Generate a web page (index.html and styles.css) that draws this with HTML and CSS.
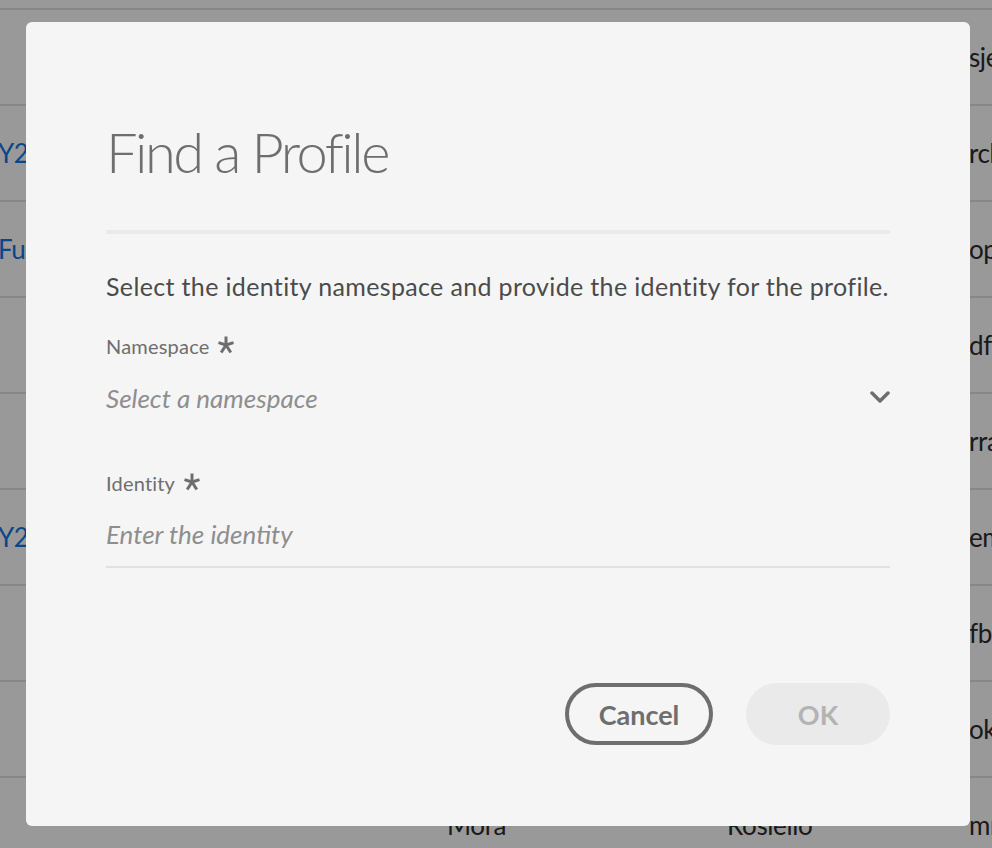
FILE: index.html
```html
<!DOCTYPE html>
<html lang="en">
<head>
<meta charset="utf-8">
<title>Find a Profile</title>
<link rel="stylesheet" href="styles.css">
</head>
<body>
<main class="page">
  <div class="table">
    <div class="row"><span class="cell c1 link"></span><span class="cell c2">Jensen</span><span class="cell c3">Sara</span><span class="cell c4">sjensen</span></div>
    <div class="row"><span class="cell c1 link">Y29sZWN0aW9u</span><span class="cell c2">Chang</span><span class="cell c3">Richard</span><span class="cell c4">rchang</span></div>
    <div class="row"><span class="cell c1 link">FuZW50aXR5</span><span class="cell c2">Patel</span><span class="cell c3">Omar</span><span class="cell c4">opatel</span></div>
    <div class="row"><span class="cell c1 link"></span><span class="cell c2">Farley</span><span class="cell c3">Dana</span><span class="cell c4">dfarley</span></div>
    <div class="row"><span class="cell c1 link"></span><span class="cell c2">Ramos</span><span class="cell c3">Rita</span><span class="cell c4">rramos</span></div>
    <div class="row"><span class="cell c1 link">Y2FsbGVk</span><span class="cell c2">Miller</span><span class="cell c3">Emma</span><span class="cell c4">emiller</span></div>
    <div class="row"><span class="cell c1 link"></span><span class="cell c2">Benson</span><span class="cell c3">Frank</span><span class="cell c4">fbenson</span></div>
    <div class="row"><span class="cell c1 link"></span><span class="cell c2">Kim</span><span class="cell c3">Olivia</span><span class="cell c4">okim</span></div>
    <div class="row"><span class="cell c1 link"></span><span class="cell c2">Mora</span><span class="cell c3">Rosiello</span><span class="cell c4">mross</span></div>
  </div>
</main>

<div class="underlay"></div>

<div class="modal-wrap">
  <section class="dialog" role="dialog" aria-labelledby="dlg-title">
    <h1 class="dialog-title" id="dlg-title">Find a Profile</h1>
    <hr class="divider">
    <p class="dialog-desc">Select the identity namespace and provide the identity for the profile.</p>

    <div class="field">
      <label class="field-label">Namespace
        <svg class="asterisk" width="16" height="18" viewBox="0 0 16 18" aria-hidden="true">
          <g stroke="#6e6e6e" stroke-width="3" stroke-linecap="butt" fill="none">
            <line x1="8" y1="9" x2="8" y2="0.5"/>
            <line x1="8" y1="9" x2="0.5" y2="6.6"/>
            <line x1="8" y1="9" x2="15.5" y2="6.6"/>
            <line x1="8" y1="9" x2="3.2" y2="16.5"/>
            <line x1="8" y1="9" x2="12.8" y2="16.5"/>
          </g>
        </svg>
      </label>
      <div class="picker">
        <span class="placeholder">Select a namespace</span>
        <svg class="chevron" width="20" height="12" viewBox="0 0 20 12" aria-hidden="true">
          <polyline points="2,2 10,10 18,2" fill="none" stroke="#6e6e6e" stroke-width="3.5" stroke-linecap="round" stroke-linejoin="round"/>
        </svg>
      </div>
    </div>

    <div class="field field-identity">
      <label class="field-label">Identity
        <svg class="asterisk" width="16" height="18" viewBox="0 0 16 18" aria-hidden="true">
          <g stroke="#6e6e6e" stroke-width="3" stroke-linecap="butt" fill="none">
            <line x1="8" y1="9" x2="8" y2="0.5"/>
            <line x1="8" y1="9" x2="0.5" y2="6.6"/>
            <line x1="8" y1="9" x2="15.5" y2="6.6"/>
            <line x1="8" y1="9" x2="3.2" y2="16.5"/>
            <line x1="8" y1="9" x2="12.8" y2="16.5"/>
          </g>
        </svg>
      </label>
      <div class="textfield">
        <span class="placeholder">Enter the identity</span>
      </div>
    </div>

    <footer class="dialog-footer">
      <button class="btn btn-secondary" type="button">Cancel</button>
      <button class="btn btn-cta" type="button" disabled>OK</button>
    </footer>
  </section>
</div>
</body>
</html>
```

FILE: styles.css
```css
* { box-sizing: border-box; }

html, body {
  margin: 0;
  padding: 0;
  width: 992px;
  height: 848px;
  overflow: hidden;
  background: #ffffff;
  font-family: Lato, "Open Sans", sans-serif;
}

.page {
  width: 992px;
  height: 848px;
  overflow: hidden;
}

.table {
  padding-top: 8px;
}

.row {
  display: flex;
  align-items: center;
  height: 96px;
  border-top: 2px solid #e1e1e1;
  font-size: 26px;
  letter-spacing: -0.4px;
  color: #2c2c2c;
  white-space: nowrap;
}

.cell { overflow: hidden; }

.c1 { width: 449px; margin-left: -2px; flex: none; }
.c2 { width: 280px; flex: none; }
.c3 { width: 242px; flex: none; }
.c4 { flex: none; }

.link { color: #1473e6; }

.underlay {
  position: fixed;
  inset: 0;
  background: rgba(0, 0, 0, 0.4);
}

.modal-wrap {
  position: fixed;
  inset: 0;
  display: flex;
  align-items: center;
  padding-left: 26px;
}

.dialog {
  width: 944px;
  height: 804px;
  background: #f5f5f5;
  border-radius: 6px;
  padding: 96px 80px 81px;
  display: flex;
  flex-direction: column;
}

.dialog-title {
  margin: 0;
  font-size: 56px;
  font-weight: 300;
  line-height: 1.2;
  letter-spacing: -2.5px;
  color: #6e6e6e;
}

.divider {
  margin: 45px 0 0;
  border: 0;
  height: 4px;
  background: #eaeaea;
}

.dialog-desc {
  margin: 37px 0 0;
  font-size: 25px;
  line-height: 1.2;
  letter-spacing: 0.35px;
  color: #4b4b4b;
}

.field {
  display: flex;
  flex-direction: column;
  margin-top: 33px;
}

.field-identity { margin-top: 47px; }

.field-label {
  display: flex;
  align-items: center;
  gap: 9px;
  font-size: 20px;
  line-height: 1.2;
  letter-spacing: 0.2px;
  color: #6e6e6e;
}

.asterisk { flex: none; margin-top: -2px; }

.picker, .textfield {
  display: flex;
  align-items: center;
  justify-content: space-between;
  height: 52px;
  margin-top: 14px;
}

.picker .chevron { margin-top: -3px; }

.textfield {
  border-bottom: 2px solid #e1e1e1;
  height: 62px;
  margin-top: 11px;
  padding-bottom: 4px;
}

.placeholder {
  font-size: 26px;
  font-style: italic;
  color: #8e8e8e;
}

.chevron { flex: none; }

.dialog-footer {
  margin-top: auto;
  display: flex;
  justify-content: flex-end;
  gap: 33px;
}

.btn {
  height: 62px;
  border-radius: 31px;
  font-family: inherit;
  font-size: 27px;
  font-weight: 700;
  padding: 0;
}

.btn-secondary {
  width: 148px;
  background: transparent;
  border: 4px solid #6e6e6e;
  color: #6e6e6e;
}

.btn-cta {
  width: 144px;
  background: #eaeaea;
  border: 0;
  color: #b3b3b3;
}
```
